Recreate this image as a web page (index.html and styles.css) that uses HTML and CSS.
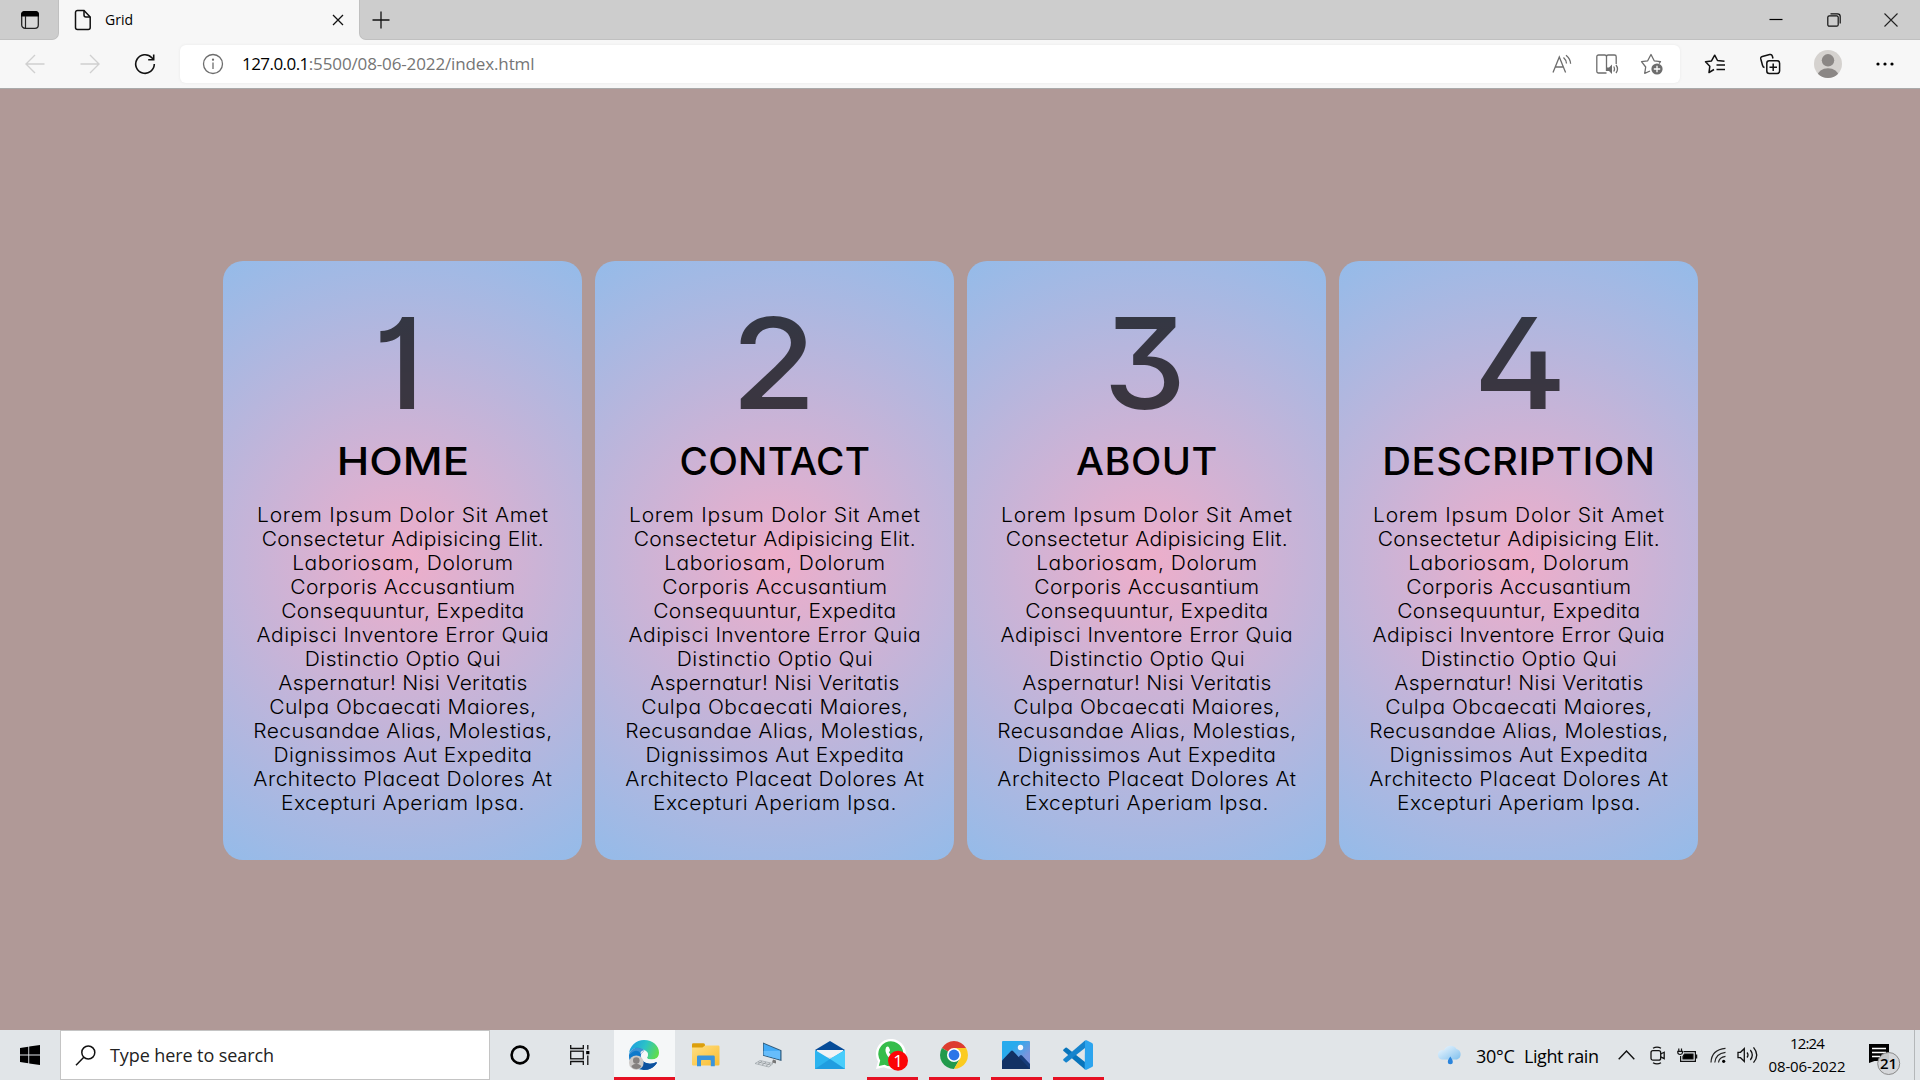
FILE: index.html
```html
<!DOCTYPE html>
<html lang="en">
<head>
<meta charset="utf-8">
<title>Grid</title>
<link rel="stylesheet" href="styles.css">
</head>
<body>
<div class="screen">
  <header class="tabbar">
    <div class="tab-actions"><svg width="20" height="20" viewBox="0 0 20 20"><rect x="1.700" y="1.700" width="16.600" height="16.600" rx="3.400" fill="#d8d8d8" stroke="#222" stroke-width="1.300"/><path d="M1 6.500V4.500A3.500 3.500 0 0 1 4.500 1h11A3.500 3.500 0 0 1 19 4.500v2z" fill="#000"/><path d="M5.500 6v12" stroke="#222" stroke-width="1.200"/></svg></div>
    <div class="tab">
      <svg width="18" height="22" viewBox="0 0 18 22" fill="none" stroke="#111" stroke-width="1.500"><path d="M3.500 1.500H10L16.200 8v10.500a2 2 0 0 1-2 2H3.500a2 2 0 0 1-2-2v-15a2 2 0 0 1 2-2z"/><path d="M10 1.500V6a2 2 0 0 0 2 2h4.200"/></svg>
      <span class="tab-title">Grid</span>
      <svg class="tab-close" width="12" height="12" viewBox="0 0 12 12" stroke="#111" stroke-width="1.300"><path d="M1 1l10 10M11 1L1 11"/></svg>
    </div>
    <div class="tab-rest">
      <svg class="new-tab" width="18" height="18" viewBox="0 0 18 18" stroke="#111" stroke-width="1.300"><path d="M9 .5v17M.5 9h17"/></svg>
      <div class="window-buttons">
        <div><svg width="14" height="14" viewBox="0 0 14 14"><path d="M.5 6.500h13" stroke="#000" stroke-width="1.200"/></svg></div>
        <div><svg width="14" height="14" viewBox="0 0 14 14" fill="none" stroke="#111" stroke-width="1.200"><rect x=".8" y="2.800" width="10.400" height="10.400" rx="1.500"/><path d="M3.500 .8h7a2.700 2.700 0 0 1 2.700 2.700v7"/></svg></div>
        <div><svg width="14" height="14" viewBox="0 0 14 14" stroke="#222" stroke-width="1.100"><path d="M.5 .5l13 13M13.500 .5l-13 13"/></svg></div>
      </div>
    </div>
  </header>
  <nav class="toolbar">
    <div class="nav-button"><svg width="20" height="20" viewBox="0 0 20 20" fill="none" stroke="#d0d0d0" stroke-width="1.400"><path d="M19.500 10H1M10 1L1 10l9 9"/></svg></div>
    <div class="nav-button"><svg width="20" height="20" viewBox="0 0 20 20" fill="none" stroke="#d0d0d0" stroke-width="1.400"><path d="M.5 10H19M10 1l9 9-9 9"/></svg></div>
    <div class="nav-button"><svg width="22" height="22" viewBox="0 0 22 22" fill="none" stroke="#111" stroke-width="1.600"><path d="M20.300 11A9.300 9.300 0 1 1 17.800 4.700L19.500 6.500M19.700 1.500v5.300h-5.500"/></svg></div>
    <div class="address">
      <svg width="22" height="22" viewBox="0 0 22 22" fill="none" stroke="#6d6d6d" stroke-width="1.300"><circle cx="11" cy="11" r="9.500"/><path d="M11 9.500v6.500"/><circle cx="11" cy="6.700" r=".5" fill="#6d6d6d"/></svg>
      <span class="url"><span class="host">127.0.0.1</span>:5500/08-06-2022/index.html</span>
      <div class="address-icons">
        <div><svg width="22" height="20" viewBox="0 0 22 20" fill="none" stroke="#6d6d6d" stroke-width="1.300"><path d="M2 18.500L8.300 3l6.300 15.500M4.300 13h8"/><path d="M12.500 3.500q2.800 2.500 3 6M15 1.200q4.500 3.700 4.600 8.600"/></svg></div>
        <div><svg width="24" height="22" viewBox="0 0 24 22" fill="none" stroke="#6d6d6d" stroke-width="1.300"><path d="M11.500 20H3.500a1.700 1.700 0 0 1-1.700-1.700V3.700A1.700 1.700 0 0 1 3.500 2h6.300q1.700 0 1.700 1.700V18M11.500 3.700Q11.500 2 13.200 2h6.300a1.700 1.700 0 0 1 1.700 1.700V11"/><path d="M12 14.500h2l3-3v9.500l-3-3h-2z" fill="#6d6d6d" stroke="none"/><path d="M18.700 13.500q1.600 2.500 0 5M21 12q3 4 0 8"/></svg></div>
        <div><svg width="24" height="22" viewBox="0 0 24 22" fill="none" stroke="#6d6d6d" stroke-width="1.300" stroke-linejoin="round"><path d="M10 18l-5.300 2.300 1-6.300L1.500 8.700l6.200-.9L11 1.500l3.200 6.300 6.300.9L19 10.500"/><circle cx="17" cy="16" r="5.600" fill="#6d6d6d" stroke="none"/><path d="M17 12.800v6.400M13.800 16h6.400" stroke="#fff"/></svg></div>
      </div>
    </div>
    <div class="tool first"><svg width="22" height="20" viewBox="0 0 22 20" fill="none" stroke="#111" stroke-width="1.500" stroke-linejoin="round"><path d="M10 15.500l-5 3 .8-6.200L1.500 7.800l6-.9L10.700 1.200 13.500 6.500l7 .8M12.500 11H21M12.500 15.500H21"/></svg></div>
    <div class="tool"><svg width="22" height="22" viewBox="0 0 22 22" fill="none" stroke="#111" stroke-width="1.500"><rect x="7.800" y="7.800" width="12.800" height="12.800" rx="2.500"/><path d="M14.200 10.500v7.500M10.500 14.200H18M5.500 14.500q-1.500-.3-2-2.300L1.800 6q-.5-2 1.500-2.500L10.700 1.500q2-.5 2.600 1.500l.7 2.500"/></svg></div>
    <div class="tool profile"><svg width="28" height="28" viewBox="0 0 28 28"><defs><clipPath id="avatar"><circle cx="14" cy="14" r="14"/></clipPath></defs><g clip-path="url(#avatar)"><path d="M0 0h28v28H0z" fill="#d5d2cf"/><circle cx="14" cy="10.300" r="6.200" fill="#8b8785"/><ellipse cx="14" cy="26" rx="10.500" ry="7.700" fill="#8b8785"/></g></svg></div>
    <div class="tool more"><svg width="18" height="4" viewBox="0 0 18 4"><circle cx="2" cy="2" r="1.600"/><circle cx="9" cy="2" r="1.600"/><circle cx="16" cy="2" r="1.600"/></svg></div>
  </nav>

  <main class="page">
    <section class="card"><div class="number one">1</div><h2 class="home">HOME</h2><p><span>Lorem Ipsum Dolor Sit Amet</span> <span>Consectetur Adipisicing Elit.</span> <span>Laboriosam, Dolorum</span> <span>Corporis Accusantium</span> <span>Consequuntur, Expedita</span> <span>Adipisci Inventore Error Quia</span> <span>Distinctio Optio Qui</span> <span>Aspernatur! Nisi Veritatis</span> <span>Culpa Obcaecati Maiores,</span> <span>Recusandae Alias, Molestias,</span> <span>Dignissimos Aut Expedita</span> <span>Architecto Placeat Dolores At</span> <span>Excepturi Aperiam Ipsa.</span></p></section>
    <section class="card"><div class="number two">2</div><h2 class="contact">CONTACT</h2><p><span>Lorem Ipsum Dolor Sit Amet</span> <span>Consectetur Adipisicing Elit.</span> <span>Laboriosam, Dolorum</span> <span>Corporis Accusantium</span> <span>Consequuntur, Expedita</span> <span>Adipisci Inventore Error Quia</span> <span>Distinctio Optio Qui</span> <span>Aspernatur! Nisi Veritatis</span> <span>Culpa Obcaecati Maiores,</span> <span>Recusandae Alias, Molestias,</span> <span>Dignissimos Aut Expedita</span> <span>Architecto Placeat Dolores At</span> <span>Excepturi Aperiam Ipsa.</span></p></section>
    <section class="card"><div class="number three">3</div><h2 class="about">ABOUT</h2><p><span>Lorem Ipsum Dolor Sit Amet</span> <span>Consectetur Adipisicing Elit.</span> <span>Laboriosam, Dolorum</span> <span>Corporis Accusantium</span> <span>Consequuntur, Expedita</span> <span>Adipisci Inventore Error Quia</span> <span>Distinctio Optio Qui</span> <span>Aspernatur! Nisi Veritatis</span> <span>Culpa Obcaecati Maiores,</span> <span>Recusandae Alias, Molestias,</span> <span>Dignissimos Aut Expedita</span> <span>Architecto Placeat Dolores At</span> <span>Excepturi Aperiam Ipsa.</span></p></section>
    <section class="card"><div class="number four">4</div><h2 class="description">DESCRIPTION</h2><p><span>Lorem Ipsum Dolor Sit Amet</span> <span>Consectetur Adipisicing Elit.</span> <span>Laboriosam, Dolorum</span> <span>Corporis Accusantium</span> <span>Consequuntur, Expedita</span> <span>Adipisci Inventore Error Quia</span> <span>Distinctio Optio Qui</span> <span>Aspernatur! Nisi Veritatis</span> <span>Culpa Obcaecati Maiores,</span> <span>Recusandae Alias, Molestias,</span> <span>Dignissimos Aut Expedita</span> <span>Architecto Placeat Dolores At</span> <span>Excepturi Aperiam Ipsa.</span></p></section>
  </main>

  <footer class="taskbar">
    <div class="start"><svg width="20" height="20" viewBox="0 0 20 20"><path d="M0 3l8.300-1.200v7.700H0zM9.200 1.600L20 0v9.500H9.200zM0 10.400h8.300v7.800L0 17zM9.200 10.400H20V20L9.200 18.400z"/></svg></div>
    <div class="search"><svg width="21" height="21" viewBox="0 0 21 21" fill="none" stroke="#111" stroke-width="1.500"><circle cx="13.300" cy="7.500" r="6.500"/><path d="M8.800 12.300L1 20.300"/></svg><span>Type here to search</span></div>
    <div class="sys"><svg width="20" height="20" viewBox="0 0 20 20"><circle cx="10" cy="10" r="8.400" fill="none" stroke="#000" stroke-width="2.600"/></svg></div>
    <div class="sys"><svg width="21" height="20" viewBox="0 0 21 20" fill="none" stroke="#111" stroke-width="1.300"><path d="M.7 0v3.500h12.600V0M.7 20v-3.500h12.600V20M17.800 0v4.500M17.800 10.500V20"/><rect x=".7" y="6.200" width="12.600" height="7.600"/><path d="M16.200 6h3.200v3.200h-3.200z" fill="#000" stroke="none"/></svg></div>
    <div class="apps">
      <div class="app active"><svg width="30" height="30" viewBox="0 0 30 30"><defs><linearGradient id="edge-top" x1="0" y1=".3" x2="1" y2=".6"><stop offset="0" stop-color="#1b9de2"/><stop offset=".5" stop-color="#2cc3c6"/><stop offset="1" stop-color="#61dd4a"/></linearGradient><linearGradient id="edge-low" x1="0" y1="0" x2="1" y2="1"><stop offset="0" stop-color="#168ad8"/><stop offset="1" stop-color="#0b4e9e"/></linearGradient></defs><path d="M0 15A15 15 0 0 0 15 30q8 0 12.500-6.500.5-1.500-1-1-5 2.500-10 0-5.500-3-4.500-8.500Q8 7 0 15z" fill="url(#edge-low)"/><path d="M0 14A15 15 0 0 1 15 0c9 0 15 6 15 12.500 0 4.500-3 7-7.500 7-3.500 0-5-1.200-4.300-2.300 1.500-2.200 1-4.700-1.200-6.200C11 6 2 7.500 0 14z" fill="url(#edge-top)"/><path d="M0 15C1 8 10 5.500 15.800 10.300 12.500 10 10.500 13 11 17c.7 5 4 8 8.500 9.500-2 2-7 3.500-10 2.500C3 27 0 21 0 15z" fill="#0c78cb" opacity=".8"/><path d="M15 11.300c-4 1-4 8 .8 11 4.200 2.600 8.200 1.200 11.500-.3q1 .5.200 1.500C23 30 16 31 11.500 28.500 15.500 27 8.500 16 15 11.300z" fill="#0d529f"/><path d="M16.500 11.700c-3.800-.6-5.300 3.300-4.300 6.300.6 2.500 3.600 4.900 6.800 4.500 3.500 0 6-.5 8-1.500l.5-2.500c-4 1.500-8.500 1.300-9.400-.3-.4-.7 2.400-4.200-1.600-6.500z" fill="#f5f7f8"/><circle cx="7.300" cy="22.700" r="7.300" fill="#ccc9c7"/><circle cx="7.300" cy="20.600" r="3.300" fill="#85817f"/><path d="M2.300 26q5-4.500 10 0-1 3-5 3t-5-3z" fill="#85817f"/></svg></div>
      <div class="app"><svg width="28" height="24" viewBox="0 0 28 24"><defs><linearGradient id="folder" x1="0" y1="0" x2="1" y2="1"><stop offset="0" stop-color="#ffdf83"/><stop offset="1" stop-color="#f9bd32"/></linearGradient></defs><path d="M0 8V1.500Q0 .3 1.200 .3h10.300q1.500 0 1.500 1.500v3z" fill="#dc9f0c"/><path d="M0 4.500h10.500l2.500-2h13.300q1.200 0 1.200 1.200v17.500q0 1.200-1.200 1.200H1.200Q0 22.400 0 21.200z" fill="url(#folder)"/><path d="M5 23.200v-9.400q0-1.300 1.300-1.300h15.200q1.300 0 1.300 1.300v9.400h-4v-5.500q0-.8-.8-.8H9.800q-.8 0-.8.8v5.500z" fill="#3994dd"/></svg></div>
      <div class="app"><svg width="28" height="27" viewBox="0 0 28 27"><path d="M9 .5l18.500 7.800V19L9 13.700z" fill="#315b7a"/><path d="M9.700 1.700l16.500 7v8.800L9.700 12.900z" fill="#42aaf5"/><path d="M9.700 9l16.500-.3v8.800L9.700 12.900z" fill="#66bdfb"/><path d="M19 17.500l3 1v3l-4-1z" fill="#777"/><path d="M6 18.500l13 3-4 3.500L1 21.500z" fill="#dde1e4" stroke="#9aa1a6" stroke-width=".7"/><path d="M4 20l13 3M8 19l-4 3.200M12 20l-4 3.200M16 21l-4 3.200" stroke="#8b9297" stroke-width=".7" fill="none"/></svg></div>
      <div class="app"><svg width="30" height="28" viewBox="0 0 30 28"><path d="M0 9L15 0l15 9-15 7z" fill="#064c98"/><path d="M2 9h26v7H2z" fill="#f1f3f5"/><path d="M0 9l15 9L30 9v19H0z" fill="#2cb4ef"/><path d="M15 18L30 9v19z" fill="#48cdfb"/><path d="M15 18L0 28h30z" fill="#158ad4" opacity=".55"/></svg></div>
      <div class="app running"><svg width="34" height="32" viewBox="0 0 34 32"><path d="M1 30l2-7.500A15 15 0 1 1 9 28.200z" fill="#fff"/><path d="M3.800 27l1.400-5.500A12.500 12.500 0 1 1 9.600 25.700z" fill="#36bd4b"/><path d="M11 8.500q1.800-2 3 0l1 2.500q.3 1-1.200 2.300 1.800 3.500 5.200 4.700l1.700-1.900 4 2q-.5 4.200-4.200 4.200C15 21.500 8.500 14 11 8.500z" fill="#fff"/><circle cx="23" cy="21.800" r="10" fill="#fb0506"/><text x="23" y="27.500" text-anchor="middle" font-size="17" fill="#fff">1</text></svg></div>
      <div class="app running"><svg width="28" height="28" viewBox="0 0 28 28"><path d="M14 14L1.900 7A14 14 0 0 1 26.100 7z" fill="#dd3c2f"/><path d="M14 14L1.900 7A14 14 0 0 0 14 28l6-10.500z" fill="#229a4c"/><path d="M14 7h12.100A14 14 0 0 1 14 28l6-10.500z" fill="#fbcb20"/><circle cx="14" cy="14" r="7" fill="#fff"/><circle cx="14" cy="14" r="5.400" fill="#2a76e8"/></svg></div>
      <div class="app running"><svg width="28" height="28" viewBox="0 0 28 28"><defs><linearGradient id="photo-sky" x1="0" y1="0" x2="1" y2="1"><stop offset=".3" stop-color="#28abed"/><stop offset=".7" stop-color="#7b94dd"/></linearGradient></defs><rect width="28" height="28" rx="1" fill="url(#photo-sky)"/><path d="M14 19l4-4.500q1-1 2 0l8 8.500v5H14z" fill="#173c7a"/><path d="M0 19.500L9 10q1-.8 2 0l17 18H0z" fill="#123164"/><circle cx="18.500" cy="6.500" r="2.700" fill="#f5f8fc"/></svg></div>
      <div class="app running"><svg width="30" height="30" viewBox="0 0 30 30"><path d="M.5 9.500l2-1.800q.7-.5 1.400 0L22 22v7.500L.5 11q-.7-.8 0-1.500z" fill="#0874bb"/><path d="M.5 20.500l2 1.800q.7.500 1.400 0L22 8V.5L.5 19q-.7.800 0 1.500z" fill="#1684cd"/><path d="M22 .4q.7-.4 1.500-.1l5.500 2.600q1 .5 1 1.600v21q0 1.100-1 1.600l-5.500 2.600q-1 .4-1.800-.4z" fill="#2ca4ee"/></svg></div>
    </div>
    <div class="tray">
      <svg class="weather" width="26" height="20" viewBox="0 0 26 20"><defs><linearGradient id="cloud" x1="0" y1="0" x2="1" y2="1"><stop offset="0" stop-color="#f4faff"/><stop offset="1" stop-color="#7fc0ee"/></linearGradient></defs><path d="M5 14.500A4.800 4.800 0 0 1 5 5q1.500 0 2 .4A7 7 0 0 1 19.500 4 5.500 5.500 0 0 1 20 14.500z" fill="url(#cloud)"/><path d="M13.300 11.500q2.500 3.500 2.500 5.300a2.500 2.500 0 0 1-5 0q0-1.800 2.500-5.300z" fill="#2a84dc"/></svg>
      <span class="temp">30°C</span><span class="condition">Light rain</span>
      <svg class="chevron" width="17" height="10" viewBox="0 0 17 10" fill="none" stroke="#111" stroke-width="1.400"><path d="M.7 9.200L8.500 1l7.800 8.200"/></svg>
      <svg class="camera" width="16" height="19" viewBox="0 0 16 19" fill="none" stroke="#111" stroke-width="1.300"><rect x="1" y="4.700" width="9.700" height="9.500" rx="2"/><path d="M10.700 8l3.500-1.800v6.500l-3.500-1.800M3 2.300Q7 0 11 2.300M3 16.700q4 2.300 8 0"/></svg>
      <svg class="battery" width="21" height="15" viewBox="0 0 21 15" fill="none" stroke="#111" stroke-width="1.200"><path d="M6.500 3.600h11.900v9.800H3.600V8"/><path d="M19.500 6.500v4" stroke-width="1.500"/><path d="M7.500 6h8.500v5H6V8.500z" fill="#000"/><path d="M.8 3.300h4.700v1.200q0 1.700-2.300 2-2.400-.3-2.400-2zM1.800 .5v2.500M4.500 .5v2.500"/></svg>
      <svg class="wifi" width="16" height="17" viewBox="0 0 16 17" fill="none" stroke="#222" stroke-width="1.200"><path d="M1 15.500Q1.500 2.500 15.500 1.300M4.800 15.500Q5.500 6.500 15.500 5.300M8.500 15.500Q9 10.200 15.500 9.300"/><circle cx="13.700" cy="14.300" r="1.600" fill="#000" stroke="none"/></svg>
      <svg class="volume" width="22" height="18" viewBox="0 0 22 18" fill="none" stroke="#111" stroke-width="1.300"><path d="M1 6.300h2.500L7.300 2.500v13l-3.800-3.800H1zM10 6.500q2 2.500 0 5M13.300 4q4 5 0 10M16.500 1.300q6.500 7.700 0 15.400"/></svg>
      <div class="clock"><span class="time">12:24</span><span class="date">08-06-2022</span></div>
      <svg class="notifications" width="34" height="32" viewBox="0 0 34 32"><path d="M1 1h20v17H6.500L1 20z"/><path d="M4 5.500h14M4 9.500h14M4 13.500h8" stroke="#fff" stroke-width="1.300"/><circle cx="20.700" cy="20.500" r="11" fill="#d4d6d8" fill-opacity=".93" stroke="#8a8a8a"/><text x="20.500" y="26" text-anchor="middle" font-size="15" font-weight="600">21</text></svg>
    </div>
    <div class="show-desktop"></div>
  </footer>
</div>
</body>
</html>
```
FILE: styles.css
```css
* { box-sizing: border-box; }
body { margin: 0; font-family: "Open Sans", "Noto Sans", sans-serif; color: #000; }
svg { display: block; flex: none; }
.screen { width: 1920px; height: 1080px; display: flex; flex-direction: column; overflow: hidden; }

/* Browser tabs */
.tabbar { height: 40px; display: flex; background: #f7f7f7; }
.tab-actions { width: 59px; height: 40px; padding: 10px 0 0 20px; background: #cdcdcd; border: solid #c0c0c0; border-width: 0 1px 1px 0; border-radius: 0 0 7px 0; }
.tab { width: 300px; height: 40px; display: flex; align-items: center; padding: 0 15px; background: #f7f7f7; }
.tab-title { margin-left: 13px; font-size: 14px; line-height: 20px; }
.tab-close { margin-left: auto; }
.tab-rest { flex: 1; display: flex; align-items: center; background: #cdcdcd; border: solid #c0c0c0; border-width: 0 0 1px 1px; border-radius: 0 0 0 7px; }
.new-tab { margin-left: 12px; }
.window-buttons { margin-left: auto; display: flex; }
.window-buttons div { width: 57.5px; height: 39px; display: grid; place-items: center; }

/* Address bar */
.toolbar { height: 48px; display: flex; align-items: center; padding-left: 7.5px; background: #f7f7f7; }
.nav-button { width: 55px; display: grid; place-items: center; }
.address { width: 1500px; height: 38px; margin-left: 7.5px; display: flex; align-items: center; padding: 0 6px 0 22px; background: #fff; border-radius: 6px; box-shadow: 0 0 3px #e8e8e8; }
.url { margin-left: 18px; padding-bottom: 2px; font-size: 17px; letter-spacing: -.13px; color: #757575; }
.host { color: #000; letter-spacing: -.55px; }
.address-icons { margin-left: auto; display: flex; }
.address-icons div { width: 45px; display: grid; place-items: center; }
.tool { width: 55px; display: grid; place-items: center; }
.first { margin-left: 7.5px; }
.profile { width: 61px; }
.more { width: 53px; }

/* Page */
.page { flex: 1; display: grid; grid-template-columns: repeat(4, 359.8px); gap: 12.2px; justify-content: center; align-content: center; padding: 2px 0 0 1px; background: #b09997; border-top: 1px solid #aaa; font-family: Inter, "Open Sans", sans-serif; }
.card { height: 599px; border-radius: 20px; padding: 34px 0; text-align: center; background: radial-gradient(circle, #eeaeca 0%, #94bbe9 100%); font-feature-settings: "cv01", "cv02", "cv09", "cv11"; }
.number { font-size: 126px; line-height: 136px; font-weight: 460; color: rgba(0, 0, 0, .7); }
.one { padding-right: 8px; }
.two { padding-right: 2px; transform: scaleX(1.1); }
.three { padding-right: 4px; transform: scaleX(1.05); }
.four { padding-left: 2px; transform: scaleX(1.14); }
.card h2 { margin: 5px 0 0; font-size: 38px; line-height: 50px; font-weight: 480; }
.home { transform: scaleX(1.15); }
.contact { letter-spacing: .2px; transform: scaleX(1.02); }
.about { letter-spacing: .5px; transform: scaleX(1.04); }
.description { letter-spacing: .45px; transform: scaleX(1.05); }
.card p { margin: 17px 0 0; font-size: 20px; line-height: 24px; font-weight: 300; letter-spacing: .45px; transform: scaleX(1.05); }
.card p span { display: block; white-space: nowrap; }
.card p span:nth-child(1) { letter-spacing: .68px; }
.card p span:nth-child(2) { letter-spacing: .34px; }
.card p span:nth-child(3) { letter-spacing: .5px; }
.card p span:nth-child(4) { letter-spacing: .37px; }
.card p span:nth-child(5) { letter-spacing: .4px; }
.card p span:nth-child(8) { letter-spacing: .28px; }
.card p span:nth-child(9) { letter-spacing: .48px; }
.card p span:nth-child(10) { letter-spacing: .4px; }

/* Taskbar */
.taskbar { height: 50px; display: flex; background: #e1e5e8; }
.start { width: 60px; display: grid; place-items: center; }
.search { width: 430px; display: flex; align-items: center; padding-left: 14px; background: #fff; border: 1px solid #c4c4c4; }
.search span { margin-left: 14px; font-size: 18px; letter-spacing: -.09px; color: #222; }
.sys { width: 60px; display: grid; place-items: center; }
.apps { display: flex; margin-left: 4px; }
.app { width: 62px; height: 50px; display: grid; place-items: center; }
.active { width: 61px; background: #f5f7f8; border-bottom: 3px solid #e61123; padding: 3px 1px 0 0; }
.running { background: linear-gradient(#e61123, #e61123) center bottom / 51px 3px no-repeat; }
.tray { display: flex; align-items: center; margin-left: auto; }
.temp { margin-left: 13px; width: 38px; padding-top: 2px; font-size: 18px; letter-spacing: -.25px; }
.condition { margin-left: 10px; width: 75px; padding-top: 2px; font-size: 18px; letter-spacing: -.42px; white-space: nowrap; }
.chevron { margin-left: 19px; }
.camera { margin-left: 15px; }
.battery { margin-left: 11px; }
.wifi { margin-left: 12px; }
.volume { margin-left: 11px; }
.clock { width: 78px; margin-left: 9px; display: flex; flex-direction: column; align-items: center; font-size: 15px; line-height: 23px; }
.time { letter-spacing: -.8px; }
.date { letter-spacing: -.14px; }
.notifications { margin-left: 22px; margin-top: 8px; }
.show-desktop { width: 6px; margin-left: 12px; border-left: 1px solid #b4b7b9; }
```
